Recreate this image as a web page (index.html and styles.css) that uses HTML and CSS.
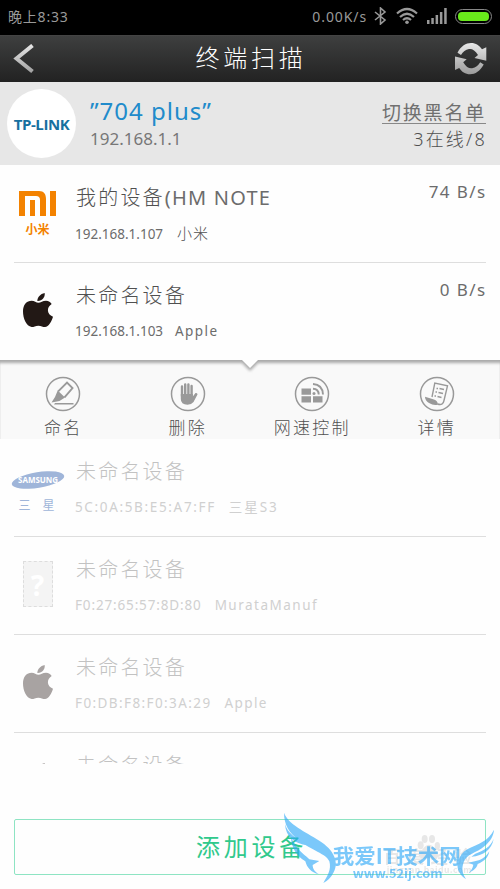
FILE: index.html
```html
<!DOCTYPE html>
<html lang="zh-CN">
<head>
<meta charset="utf-8">
<title>终端扫描</title>
<link rel="stylesheet" href="styles.css">
</head>
<body>
<svg class="defs" width="0" height="0">
  <symbol id="apple" viewBox="0 0 90 102">
    <path d="M65 0C67 12 57 25 43 24C43 12 52 3 65 0Z"/>
    <path d="M46 29C53 29 59 23 69 23C77 23 83 28 86 33C70 43 71 64 90 71C86 84 77 102 66 102C59 102 55 98 46 98C37 98 33 102 26 102C10 100 0 77 0 55C0 35 11 23 26 23C34 23 40 29 46 29Z"/>
  </symbol>
</svg>
<div class="statusbar">
  <span class="clock">晚上8:33</span>
  <span class="rate">0.00K/s</span>
  <svg class="bt" width="13" height="18" viewBox="0 0 13 18"><path d="M1 5L11 13L6.500 17V1L11 5L1 13"/></svg>
  <svg class="wifi" width="22" height="18" viewBox="0 0 22 18"><path d="M1 6.500Q11-2.500 21 6.500M4 10Q11 3.500 18 10M7 13Q11 9.500 15 13"/><circle cx="11" cy="15.300" r="1.800"/></svg>
  <svg class="signal" width="20" height="16" viewBox="0 0 20 16"><path d="M0 12h2.500v4H0zM4.300 10h2.500v6H4.300zM8.600 7h2.500v9H8.600zM12.900 4h2.500v12h-2.500zM17.200 0h2.500v16h-2.500z"/></svg>
  <span class="battery"><i></i></span>
</div>
<header class="topbar">
  <svg width="22" height="30" viewBox="0 0 22 30"><defs><linearGradient id="metal" x1="0" y1="0" x2="0" y2="32" gradientUnits="userSpaceOnUse"><stop offset="0" stop-color="#e8e8e8"/><stop offset="1" stop-color="#999"/></linearGradient></defs><path d="M19.500 1.500L3.500 14.500L19.500 27.500" fill="none" stroke="url(#metal)" stroke-width="4"/></svg>
  <h1>终端扫描</h1>
  <svg width="32" height="32" viewBox="0 0 32 32"><g fill="url(#metal)"><path d="M2.500 9.700C6 3 11 0 16 0C21 0 24.500 2.500 27 6.300L31.300 4.300V17.700L19.500 15L23 12C20 7 17 5.500 14 6C10.500 6.500 8 9 6 12Z"/><path d="M28.700 21.500C25.200 28.200 20.200 31.200 15.200 31.200C10.200 31.200 6.700 28.700 4.200 24.900L0 26.900V13.500L11.700 16.200L8.200 19.200C11.200 24.200 14.200 25.700 17.200 25.200C20.700 24.700 23.200 22.200 25.200 19.200Z"/></g></svg>
</header>
<section class="router">
  <div class="tplink">TP-LINK</div>
  <div class="who"><b>”704 plus”</b><span>192.168.1.1</span></div>
  <div class="state"><a>切换黑名单</a><span>3在线/8</span></div>
</section>
<ul class="devices">
  <li>
    <div class="logo mi"><svg width="37" height="25" viewBox="0 0 37 25"><path d="M0 0H20C25 0 27 3 27 8V25H21V9Q21 5 17 5H6V25H0ZM11 9H16V25H11ZM31 0H37V25H31Z"/></svg><span>小米</span></div>
    <div class="info"><b>我的设备<span class="model">(HM NOTE</span></b><p><span class="ip">192.168.1.107</span><span class="cjk">小米</span></p></div>
    <em>74 B/s</em>
  </li>
  <li>
    <div class="logo"><svg class="apple" width="30" height="34"><use href="#apple"/></svg></div>
    <div class="info"><b>未命名设备</b><p><span class="ip">192.168.1.103</span><span class="maker">Apple</span></p></div>
    <em>0 B/s</em>
  </li>
</ul>
<nav class="actions">
  <svg class="edge" width="500" height="18" viewBox="0 0 500 18"><defs><filter id="soft" x="-5%" y="-50%" width="110%" height="200%"><feGaussianBlur stdDeviation="1.500"/></filter></defs><path d="M-5-5H505V3H258L250 11L242 3H-5Z" fill="#aaa" filter="url(#soft)"/><path d="M0-5H500V0H258L250 8L242 0H0Z" fill="#fff"/></svg>
  <a><svg width="36" height="36" viewBox="0 0 36 36"><circle cx="18" cy="18" r="16.500"/><path class="s" d="M13.200 15.300L22 6.500L27.500 12L19.500 21.300"/><path class="f" d="M12.700 14.500L20 21.500L14.500 25L6.500 26.500L10 21ZM10 27H28.500V28.500H9Z"/></svg>命名</a>
  <a><svg width="36" height="36" viewBox="0 0 36 36"><circle cx="18" cy="18" r="16.500"/><path class="fingers" d="M12 10.500V20M15.200 8.500V20M18.400 8.500V20M21.600 10V20"/><path class="f" d="M10.800 18H22.800V20.500L25.500 17Q27.500 16.500 27.500 18.500L23.500 26Q21.500 28.700 17.500 28.700Q10.800 28.500 10.800 23Z"/></svg>删除</a>
  <a><svg width="36" height="36" viewBox="0 0 36 36"><circle cx="18" cy="18" r="16.500"/><path class="f" d="M7.500 12.500H17V18.700H7.500ZM7.500 20.300H17V26.500H7.500ZM19 20.300H28.500V26.500H19Z"/><path class="s" d="M19 8Q28.500 8.500 29 18.500M19 12.800Q24.500 13 24.700 18.500"/><circle class="f" cx="20" cy="17.500" r="1.500"/></svg>网速控制</a>
  <a><svg width="36" height="36" viewBox="0 0 36 36"><circle cx="18" cy="18" r="16.500"/><path class="page" d="M13 21L15.800 7L28.500 9.800L25 24.500Q24 30 18.500 28M17.500 12.500H19M20.500 12.500L25 13.500M16.500 16H18M19.500 16.500L24 17.500M15.500 20H17M18.500 20.500L22.500 21.500"/><path class="f" d="M6 20.800L15 23.500Q18.500 24.500 19 28.500Q15 30 10 27Q6 24.500 6 20.800Z"/></svg>详情</a>
</nav>
<ul class="devices faded">
  <li>
    <div class="logo samsung"><svg width="54" height="20" viewBox="0 0 54 20"><ellipse cx="27" cy="10" rx="26.500" ry="7.800" transform="rotate(-9 27 10)"/><text x="7" y="13" textLength="40" lengthAdjust="spacingAndGlyphs">SAMSUNG</text></svg><span>三 星</span></div>
    <div class="info"><b>未命名设备</b><p><span class="mac1">5C:0A:5B:E5:A7:FF</span><span class="s3">三星S3</span></p></div>
  </li>
  <li>
    <div class="logo"><div class="unknown">?</div></div>
    <div class="info"><b>未命名设备</b><p><span class="mac2">F0:27:65:57:8D:80</span><span class="murata">MurataManuf</span></p></div>
  </li>
  <li>
    <div class="logo"><svg class="apple" width="30" height="34"><use href="#apple"/></svg></div>
    <div class="info"><b>未命名设备</b><p><span class="mac3">F0:DB:F8:F0:3A:29</span><span class="maker">Apple</span></p></div>
  </li>
  <li>
    <div class="logo"><svg class="apple" width="30" height="34"><use href="#apple"/></svg></div>
    <div class="info"><b>未命名设备</b></div>
  </li>
</ul>
<footer><button>添加设备</button></footer>
<svg class="watermark" width="240" height="99" viewBox="0 0 720 297">
  <g class="baidu"><ellipse cx="482" cy="166" rx="9" ry="12"/><ellipse cx="494" cy="147" rx="9" ry="12"/><ellipse cx="516" cy="147" rx="9" ry="12"/><ellipse cx="532" cy="168" rx="8" ry="12"/><path d="M506 164C492 166 482 185 478 197C482 211 494 205 506 205S530 211 536 197C530 180 520 164 506 164Z"/><text x="370" y="218" font-size="52" textLength="264">百度经验</text><text x="380" y="250" font-size="26" textLength="255">jingyan.baidu.com</text></g>
  <g class="blue"><path d="M72 68C86 104 134 124 178 152C222 179 238 217 221 247C213 264 202 274 190 279C202 258 215 239 208 214C198 190 154 182 116 150C86 127 72 103 72 68Z"/><path d="M75 102C82 127 105 147 138 158L142 166C103 161 77 140 75 102Z"/><path d="M93 142C109 177 126 188 148 208L178 213L158 225C158 238 166 246 177 253C152 247 141 233 136 214C111 199 94 174 93 142Z"/><path d="M702 119C684 155 656 160 622 178C594 194 586 230 598 247C604 258 611 264 618 267C609 253 603 239 611 217C619 191 649 190 674 168C690 155 701 138 702 119Z"/><path d="M701 146C691 172 671 181 646 191L634 200C671 197 695 179 701 146ZM688 184C674 205 662 211 644 214L625 218L640 224C638 236 632 244 624 249C643 241 651 233 653 222C672 214 684 205 688 184Z"/><text x="218" y="222" class="brand" textLength="384" lengthAdjust="spacingAndGlyphs">我爱IT技术网</text><text x="278" y="264" class="url" textLength="270" lengthAdjust="spacingAndGlyphs">www.52ij.com</text></g>
</svg>
</body>
</html>
```

FILE: styles.css
```css
* { box-sizing: border-box; }
body { margin: 0; width: 500px; height: 889px; overflow: hidden; position: relative; background: #fefefe; color: #505050; font-family: "Noto Sans", "Noto Sans CJK SC", sans-serif; font-weight: 300; white-space: nowrap; }
h1, p, ul { margin: 0; padding: 0; font-weight: 300; }
b, em, i { font-weight: 300; font-style: normal; }
.defs { display: block; position: absolute; }
.statusbar { height: 35px; padding: 0 8px 3px; background: #000; color: #999; display: flex; align-items: center; font-size: 14px; font-weight: 400; }
.clock { flex: 1; font-size: 14px; letter-spacing: .8px; }
.rate { letter-spacing: .9px; margin-right: 7px; }
.bt, .wifi { fill: none; stroke: #999; stroke-width: 1.6; margin-right: 9px; }
.wifi { stroke-width: 2.2; }
.wifi circle { fill: #999; stroke: none; }
.signal { fill: #999; margin-right: 8px; }
.battery { width: 37px; height: 15px; border: 1.5px solid #888; border-radius: 8px; padding: 2px; }
.battery i { display: block; height: 9px; border-radius: 4px; background: #69e91b; }
.topbar { height: 47px; padding: 0 13px; display: flex; align-items: center; justify-content: space-between; background: linear-gradient(#3e3f3f, #222); border-top: 1px solid #444; color: #fff; }
.topbar h1 { font-size: 24px; letter-spacing: 3.7px; line-height: 42px; padding-left: 12px; padding-bottom: 3px; }
.router { height: 83px; background: #e7e7e7; display: flex; padding: 7px 14px 0 7px; }
.tplink { width: 69px; height: 69px; border-radius: 50%; background: #fff; color: #17709f; font: bold 15px/70px "Open Sans", sans-serif; letter-spacing: -.4px; text-align: center; }
.who { margin-left: 14px; flex: 1; }
.who b { display: block; color: #218bcb; font-size: 24px; font-weight: 400; line-height: 43px; letter-spacing: 1px; }
.who span { display: block; font-size: 17px; font-weight: 400; line-height: 14px; color: #777; }
.state { text-align: right; }
.state a { display: block; margin-top: 13px; height: 22px; line-height: 23px; border-bottom: 1px solid #888; font-size: 19px; font-weight: 400; letter-spacing: 1.8px; margin-bottom: 3px; color: #707070; }
.state span { font-size: 18px; line-height: 25px; letter-spacing: 2.2px; margin-right: -1px; }
.devices { list-style: none; }
.devices li { height: 98px; margin: 0 14px; border-bottom: 1px solid #dedede; display: flex; }
.devices li:last-child { border: 0; }
.devices:not(.faded) li:last-child { height: 97px; }
.logo { width: 47px; padding-top: 30px; display: flex; flex-direction: column; align-items: center; flex: none; }
.info { margin-left: 15px; flex: 1; }
.info b { display: block; font-size: 20px; line-height: 30px; margin-top: 18px; letter-spacing: 2.2px; }
.info .model { letter-spacing: 1.2px; font-weight: 400; color: #6c6c6c; }
.info p { font-size: 13.5px; font-weight: 400; line-height: 20px; margin-top: 10px; margin-left: -1px; color: #6c6c6c; }
.info p span { display: inline-block; margin-right: 14px; }
.devices em { flex: none; font-size: 17px; font-weight: 400; color: #6c6c6c; line-height: 24px; margin-top: 15px; letter-spacing: 1.4px; margin-right: -.5px; }
.mi { padding-top: 26px; fill: #f38200; color: #f38200; font-size: 12px; font-weight: 700; }
.mi span { line-height: 16px; margin-top: 6px; }
.apple { fill: #221815; margin-top: 0; }
.info p .cjk { font-size: 15px; letter-spacing: 1px; font-weight: 300; color: #505050; }
.actions { height: 79px; background: #f9f9f9; display: grid; grid-template-columns: repeat(4, 1fr); position: relative; border-left: 1px solid #eee; border-right: 1px solid #eee; }
.actions a { display: flex; flex-direction: column; align-items: center; padding-top: 16px; font-size: 17px; line-height: 31px; letter-spacing: 2.2px; }
.actions a svg { fill: none; stroke: #999; stroke-width: 1.5; }
.actions .f { fill: #999; stroke: none; }
.actions .s { stroke-width: 1.9; }
.actions .page { stroke-width: 1.4; }
.actions .fingers { stroke-width: 2.4; stroke-linecap: round; }
.edge { position: absolute; left: -1px; top: 0; }
.faded { height: 325px; overflow: hidden; color: #c2c2c2; }
.faded .info p { color: #d0d0d0; }
.faded .apple { fill: #a8a3a2; }
.samsung { padding-top: 31px; fill: #9fb5d9; color: #9fb5d9; font-size: 12px; font-weight: 400; }
.samsung svg { flex: none; }
.samsung text { fill: #fff; font: bold 8px "Noto Sans", sans-serif; }
.samsung span { line-height: 16px; margin-top: 8px; letter-spacing: 2px; word-spacing: 5px; }
.unknown { width: 30px; height: 46px; margin-top: -6px; border: 1px dashed #ddd; background: #f4f4f4; color: #fff; text-align: center; font: bold 28px/46px "Noto Sans", sans-serif; }
.info p .mac1 { letter-spacing: 1.65px; margin-right: 13px; }
.info p .mac2 { letter-spacing: .85px; margin-right: 13px; }
.info p .mac3 { letter-spacing: 1.4px; margin-right: 13px; }
.s3 { letter-spacing: 1.9px; }
.murata { letter-spacing: 1.5px; }
.maker { letter-spacing: 1.4px; }
.devices:not(.faded) .maker { margin-left: -2px; }
footer { padding: 55px 14px 0; }
button { display: block; width: 472px; height: 56px; background: none; border: 1px solid #8ee4c3; border-radius: 2px; padding: 0 0 4px 3px; color: #30c98c; font: 400 24px "Noto Sans CJK SC", sans-serif; letter-spacing: 3.7px; }
.watermark { position: absolute; left: 260px; top: 790px; }
.baidu { fill: #ccc; opacity: .45; }
.blue { fill: #2ca8f8; opacity: .62; }
.watermark text { font-family: "Noto Sans CJK SC", sans-serif; font-weight: 700; }
.brand { font-size: 62px; }
.url { font-size: 34px; }
```
